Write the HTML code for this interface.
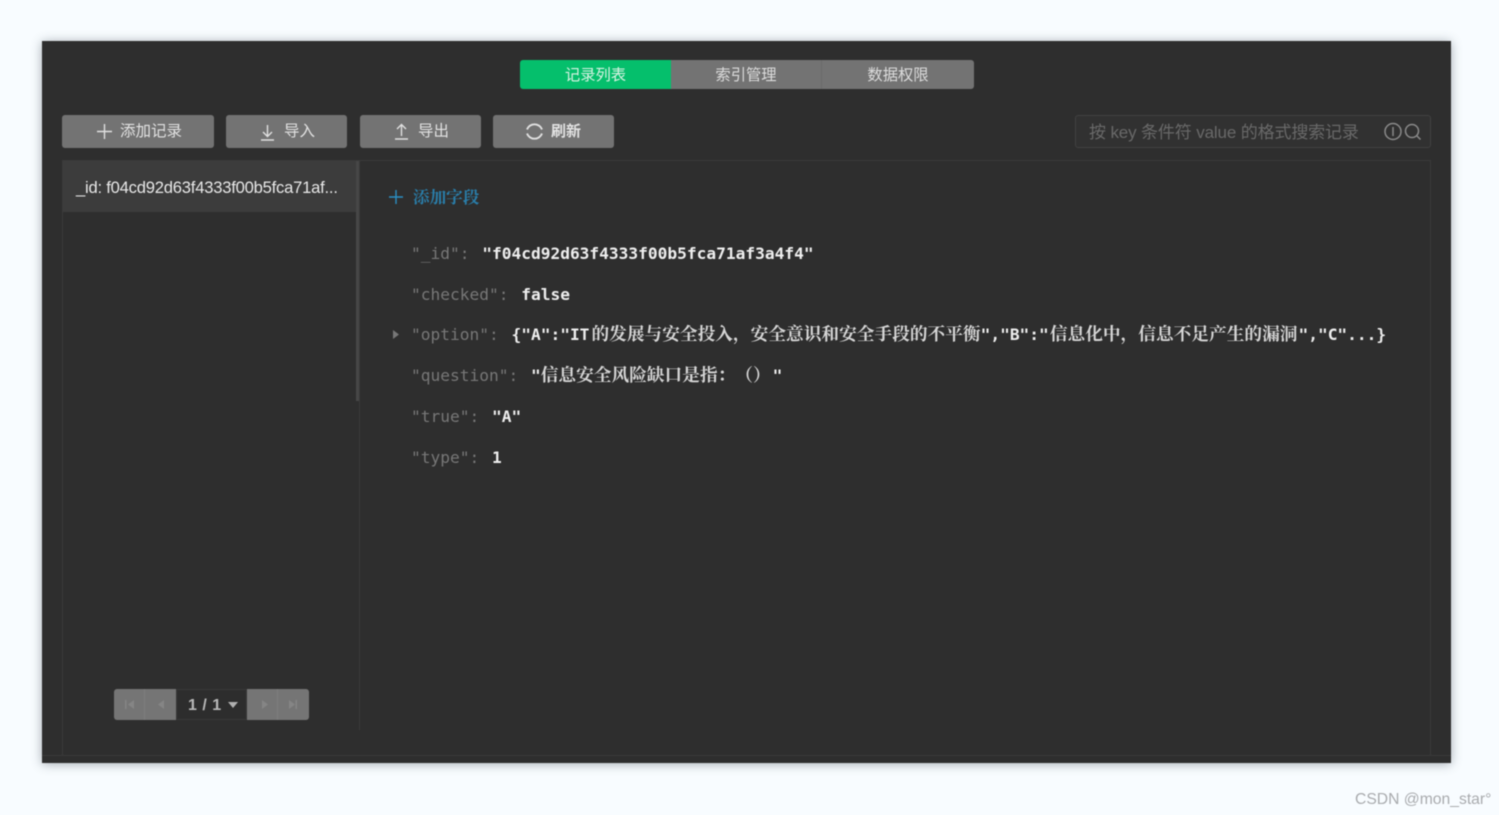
<!DOCTYPE html>
<html lang="zh"><head><meta charset="utf-8"><title>云数据库</title>
<style>
*{box-sizing:border-box;margin:0;padding:0}
html,body{width:1499px;height:815px;overflow:hidden;background:#f8fcff}
body{font-family:"Liberation Sans","Noto Sans CJK SC",sans-serif;text-spacing-trim:space-all}
#w{position:absolute;left:0;top:0;width:1499px;height:815px;filter:blur(.4px)}
.a{position:absolute}
#win{left:42px;top:41px;width:1409px;height:722px;background:#2e2e2e;box-shadow:0 1px 10px rgba(60,70,80,.45)}
.t{color:#d4d4d4;white-space:nowrap}
.tab{top:60px;height:29px;background:#737373;color:#dcdcdc;font-size:15.300px;line-height:31px;text-align:center;width:152px}
.btn{top:115px;height:33px;background:#737373;border-radius:3px;color:#e2e2e2;font-size:15.500px;line-height:34px}
.btn svg,.ic{position:absolute;fill:none;stroke:#e0e0e0;stroke-width:1.4}
.btn span{position:absolute;top:0;white-space:nowrap}
.ln{position:absolute;background:#3a3a3a}
.r{position:absolute;left:411px;height:24px;line-height:24px;font-family:"DejaVu Sans Mono","Liberation Mono",monospace;font-size:16.200px;white-space:nowrap;color:#eee;font-weight:bold}
.r i{font-style:normal;font-weight:normal;color:#777;margin-right:3px}
.r b{font-family:"Liberation Serif","Noto Serif CJK SC",serif;font-size:17.700px;font-weight:bold;color:#d6d6d6}
.pg{top:689px;height:31px;background:#757575}
</style></head><body>
<div id="w">
<div class="a" id="win"></div>

<div class="a tab" style="left:520px;width:151px;background:#05bf6c;border-radius:3px 0 0 3px;color:#d8f3e3">记录列表</div>
<div class="a tab" style="left:671px;width:151px;border-right:1px solid #6a6a6a">索引管理</div>
<div class="a tab" style="left:822px;width:152px;border-radius:0 3px 3px 0">数据权限</div>

<div class="a btn" style="left:62px;width:152px"><svg style="left:34px;top:8px" width="17" height="17" viewBox="0 0 17 17"><path d="M8.500 1v15M1 8.500h15"/></svg><span style="left:58px">添加记录</span></div>
<div class="a btn" style="left:226px;width:121px"><svg style="left:33px;top:9px" width="17" height="17" viewBox="0 0 17 17"><path d="M8.500 1v11M4 8l4.500 4.500L13 8M2 16h13"/></svg><span style="left:58px">导入</span></div>
<div class="a btn" style="left:360px;width:121px"><svg style="left:33px;top:8px" width="17" height="17" viewBox="0 0 17 17"><path d="M8.500 13V2M4 6l4.500-4.500L13 6M2 16h13"/></svg><span style="left:58px">导出</span></div>
<div class="a btn" style="left:493px;width:121px"><svg style="left:31px;top:6px;stroke-width:1.900" width="21" height="21" viewBox="0 0 21 21"><path d="M3 8.500a8 8 0 0 1 15 0M18 12.500a8 8 0 0 1-15 0"/></svg><span style="left:58px;font-size:15px;font-weight:bold">刷新</span></div>

<div class="a" style="left:1075px;top:115px;width:356px;height:33px;border:1px solid #414141;border-radius:3px;background:#313131"></div>
<div class="a t" style="left:1089px;top:121px;font-size:17px;line-height:24px;letter-spacing:-.14px;color:#696969">按 key 条件符 value 的格式搜索记录</div>
<svg class="a" style="left:1383px;top:122px" width="40" height="20" viewBox="0 0 40 20" fill="none" stroke="#8a8a8a" stroke-width="1.500"><circle cx="10" cy="9.500" r="8"/><path d="M10 5v9"/><circle cx="29" cy="9" r="6.500"/><path d="M33.500 13.500l4 4"/></svg>

<div class="ln" style="left:63px;top:160px;width:1368px;height:1px"></div>
<div class="ln" style="left:62px;top:160px;width:1px;height:595px"></div>
<div class="ln" style="left:1430px;top:160px;width:1px;height:595px"></div>
<div class="ln" style="left:359px;top:161px;width:1px;height:569px"></div>
<div class="ln" style="left:42px;top:755px;width:1409px;height:1px"></div>

<div class="a" style="left:63px;top:161px;width:295px;height:51px;background:#3c3c3c"></div>
<div class="a" style="left:356px;top:161px;width:3px;height:240px;background:#474747"></div>
<div class="a t" style="left:76px;top:176px;font-size:16.600px;line-height:24px;letter-spacing:-.22px;color:#e8e8e8">_id: f04cd92d63f4333f00b5fca71af...</div>

<svg class="a" style="left:388px;top:189px" width="16" height="16" viewBox="0 0 16 16" fill="none" stroke="#2a8fc4" stroke-width="1.400"><path d="M8 1v14M1 8h14"/></svg>
<div class="a t" style="left:413px;top:186px;font-family:'Liberation Serif','Noto Serif CJK SC',serif;font-size:16.600px;line-height:24px;font-weight:bold;color:#2a7eaa">添加字段</div>

<div class="r" style="top:242px"><i>"_id":</i> "f04cd92d63f4333f00b5fca71af3a4f4"</div>
<div class="r" style="top:283px"><i>"checked":</i> false</div>
<svg class="a" style="left:392px;top:329px" width="8" height="11" viewBox="0 0 8 11"><path d="M1 1l6 4.500-6 4.500z" fill="#777"/></svg>
<div class="r" style="top:322px"><i>"option":</i> {"A":"IT<b style="margin-left:2px">的发展与安全投入，安全意识和安全手段的不平衡</b>","B":"<b style="margin:0 1px">信息化中，信息不足产生的漏洞</b>","C"...}</div>
<div class="r" style="top:363px"><i>"question":</i> "<b style="margin-right:2px">信息安全风险缺口是指：（）</b>"</div>
<div class="r" style="top:405px"><i>"true":</i> "A"</div>
<div class="r" style="top:446px"><i>"type":</i> 1</div>

<div class="a pg" style="left:114px;width:31px;border-radius:3px 0 0 3px;border-right:1px solid #7e7e7e"></div>
<div class="a pg" style="left:145px;width:31px"></div>
<div class="a pg" style="left:247px;width:31px;border-right:1px solid #7e7e7e"></div>
<div class="a pg" style="left:278px;width:31px;border-radius:0 3px 3px 0"></div>
<svg class="a" style="left:114px;top:689px" width="195" height="31" viewBox="0 0 195 31" fill="#858585"><path d="M11 11h1.500v9H11zM20 11v9l-6-4.500zM50 11v9l-6-4.500zM148 11v9l6-4.500zM175 11v9l6-4.500zM181.500 11h1.500v9h-1.500z"/></svg>
<div class="a" style="left:176px;top:689px;width:71px;height:31px;background:#2d2d2d;border:1px solid #383838"></div>
<div class="a t" style="left:188px;top:695px;font-size:16px;line-height:22px;font-weight:bold;letter-spacing:.5px;color:#b8b8b8">1 / 1</div>
<svg class="a" style="left:227px;top:701px" width="12" height="8" viewBox="0 0 12 8"><path d="M1 1h10L6 7z" fill="#b0b0b0"/></svg>

<div class="a t" style="left:1355px;top:790px;font-size:15.700px;line-height:20px;color:#a9abae">CSDN @mon_star°</div>
</div>
</body></html>
